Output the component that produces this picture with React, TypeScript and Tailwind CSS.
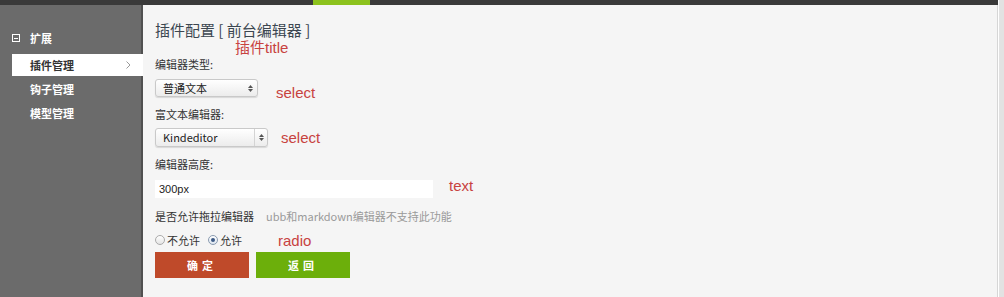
import React from 'react';

const cjk = { fontFamily: '"Noto Sans CJK SC", "Liberation Sans", sans-serif' };
const latin = { fontFamily: '"Liberation Sans", "Noto Sans CJK SC", sans-serif' };

const SelectBox = ({ value, width, divider }: { value: string; width: string; divider?: boolean }) => (
  <div
    className={`${width} flex shrink-0 items-center rounded-[3px] border border-[#c9c9c9] bg-gradient-to-b from-white to-[#ececec] shadow-[0_1px_1px_rgba(0,0,0,0.12)]`}
  >
    <span className="flex-1 pl-[7px] text-[11px] text-[#222]" style={cjk}>
      {value}
    </span>
    <span className={`flex h-full w-[13px] flex-col items-center justify-center gap-[1px] ${divider ? 'border-l border-[#d4d4d4]' : ''}`}>
      <svg width="5" height="3" viewBox="0 0 5 3">
        <path d="M0 3 L2.5 0 L5 3 Z" fill="#555" />
      </svg>
      <svg width="5" height="3" viewBox="0 0 5 3">
        <path d="M0 0 L2.5 3 L5 0 Z" fill="#555" />
      </svg>
    </span>
  </div>
);

const Note = ({ children, className }: { children: React.ReactNode; className?: string }) => (
  <span className={`shrink-0 text-[15px] leading-[18px] text-[#c8423f] ${className ?? ''}`} style={latin}>
    {children}
  </span>
);

export default function App() {
  return (
    <div className="flex h-[297px] w-[1004px] overflow-hidden bg-[#e9e9e9]">
      <div className="flex w-[998px] flex-col">
        {/* top bar */}
        <div className="flex h-[5px] shrink-0 bg-[#3a3a3a]">
          <div className="ml-[313px] w-[57px] bg-[#8cc21d]" />
        </div>

        <div className="flex flex-1">
          {/* sidebar */}
          <div className="w-[141px] bg-[#6b6b6b] pt-[25px]" style={cjk}>
            <div className="flex h-[16px] items-center pl-[12px] text-[11px] font-bold text-white">
              <span className="mr-[10px] flex h-[8px] w-[8px] items-center justify-center border border-white">
                <span className="h-px w-[4px] bg-white" />
              </span>
              扩展
            </div>
            <div className="mt-[8px] flex flex-col gap-[2px] text-[11px]">
              <div className="relative z-10 ml-[12px] mr-[-2px] flex h-[22px] items-center justify-between bg-white pl-[18px] pr-[12px] text-[#333]">
                <span className="font-bold">插件管理</span>
                <svg width="5" height="8" viewBox="0 0 5 8">
                  <path d="M0.5 0.5 L4 4 L0.5 7.5" fill="none" stroke="#999" strokeWidth="1" />
                </svg>
              </div>
              <div className="flex h-[22px] items-center pl-[30px] font-bold text-white">钩子管理</div>
              <div className="flex h-[22px] items-center pl-[30px] font-bold text-white">模型管理</div>
            </div>
          </div>

          {/* main */}
          <div className="flex-1 border-l-2 border-r border-l-[#505050] border-r-[#d6d6d6] bg-[#f5f5f5] pl-[12px] pt-[15px]">
            <div className="h-[20px] text-[15px] leading-[20px] text-[#3b4650]" style={cjk}>
              插件配置 [ 前台编辑器 ]
            </div>
            <div className="flex h-[16px] items-center pl-[80px]">
              <span className="text-[15px] text-[#c8423f]" style={latin}>
                插件title
              </span>
            </div>

            <div className="flex h-[16px] items-center text-[11px] text-[#333]" style={cjk}>
              编辑器类型:
            </div>
            <div className="mt-[7px] flex h-[18px] items-start">
              <SelectBox value="普通文本" width="w-[103px] h-[18px]" />
              <Note className="ml-[18px] mt-[5px]">select</Note>
            </div>

            <div className="mt-[9px] flex h-[16px] items-center text-[11px] text-[#333]" style={cjk}>
              富文本编辑器:
            </div>
            <div className="mt-[6px] flex h-[19px] items-start">
              <SelectBox value="Kindeditor" width="w-[113px] h-[19px]" divider />
              <Note className="ml-[13px] mt-px">select</Note>
            </div>

            <div className="mt-[9px] flex h-[16px] items-center text-[11px] text-[#333]" style={cjk}>
              编辑器高度:
            </div>
            <div className="mt-[8px] flex h-[18px] items-start">
              <div className="flex h-[18px] w-[278px] shrink-0 items-center bg-white pl-[4px] text-[11px] text-[#222]" style={latin}>
                300px
              </div>
              <Note className="ml-[16px] mt-[-3px]">text</Note>
            </div>

            <div className="mt-[10px] flex h-[16px] items-center text-[11px]" style={cjk}>
              <span className="text-[#333]">是否允许拖拉编辑器</span>
              <span className="ml-[12px] text-[#9a9a9a]">ubb和markdown编辑器不支持此功能</span>
            </div>

            <div className="mt-[8px] flex h-[16px] items-center text-[11px] text-[#333]" style={cjk}>
              <span className="mr-[2px] flex h-[10px] w-[10px] rounded-full border border-[#aaa] bg-gradient-to-b from-white to-[#e4e4e4]" />
              <span>不允许</span>
              <span className="ml-[8px] mr-[2px] flex h-[10px] w-[10px] items-center justify-center rounded-full border border-[#8a9bb0] bg-gradient-to-b from-white to-[#dde6f0]">
                <span className="h-[4px] w-[4px] rounded-full bg-[#3d5a85]" />
              </span>
              <span>允许</span>
              <Note className="ml-[36px] mt-[2px]">radio</Note>
            </div>

            <div className="mt-[4px] flex gap-[7px]" style={cjk}>
              <button className="h-[26px] w-[94px] bg-[#bf4a2a] text-[11px] font-bold tracking-[4px] text-white">
                确定
              </button>
              <button className="h-[26px] w-[94px] bg-[#6caf0b] text-[11px] font-bold tracking-[4px] text-white">
                返回
              </button>
            </div>
          </div>
        </div>
      </div>
      <div className="w-[6px] border-l border-white bg-[#e2e2e2]" />
    </div>
  );
}
